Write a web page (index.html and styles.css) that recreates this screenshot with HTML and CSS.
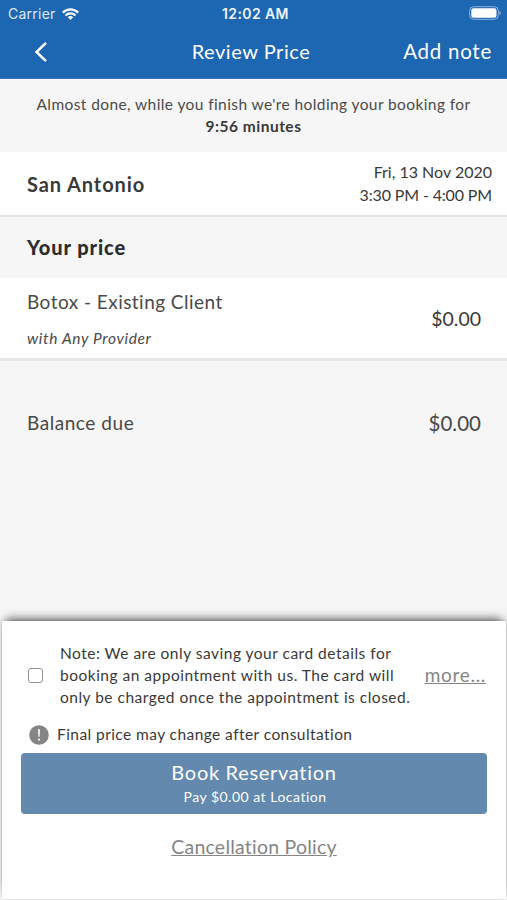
FILE: index.html
```html
<!DOCTYPE html>
<html lang="en">
<head>
<meta charset="utf-8">
<title>Review Price</title>
<link rel="stylesheet" href="styles.css">
</head>
<body>
<div class="screen">
  <header class="header">
    <div class="status">
      <div class="carrier"><span>Carrier</span>
        <svg class="wifi" viewBox="0 0 17 12" width="17" height="12" fill="none" stroke="#fff" stroke-width="2.2">
          <path d="M.8 4.6a10.9 10.9 0 0 1 15.4 0"/><path d="M3.5 7.5a7.1 7.1 0 0 1 10 0"/><path d="M8.5 12 5.8 9.3a3.8 3.8 0 0 1 5.4 0z" fill="#fff" stroke="none"/>
        </svg>
      </div>
      <span class="clock">12:02 AM</span>
      <svg class="battery" viewBox="0 0 32 14" width="32" height="14">
        <rect x=".7" y=".7" width="28.6" height="12.6" rx="3.8" fill="none" stroke="#8fb3db"/>
        <rect x="2.3" y="2.3" width="25.2" height="9.4" rx="2.2" fill="#fff"/>
        <path d="M30.4 4.8q1.4.7 1.4 2.2t-1.4 2.2z" fill="#8fb3db"/>
      </svg>
    </div>
    <nav class="nav">
      <svg class="back" viewBox="0 0 14 22" width="14" height="22" fill="none" stroke="#fff" stroke-width="2.5"><path d="M12 1.8 2.5 11 12 20.2"/></svg>
      <h1 class="title">Review Price</h1>
      <span class="add-note">Add note</span>
    </nav>
  </header>
  <section class="notice">
    <p class="notice-text">Almost done, while you finish we're holding your booking for</p>
    <p class="notice-time">9:56 minutes</p>
  </section>
  <section class="location">
    <h2 class="place">San Antonio</h2>
    <div class="when"><p class="date">Fri, 13 Nov 2020</p><p class="hours">3:30 PM - 4:00 PM</p></div>
  </section>
  <h2 class="heading"><span>Your price</span></h2>
  <section class="item">
    <div class="details"><p class="service">Botox - Existing Client</p><p class="provider">with Any Provider</p></div>
    <span class="price">$0.00</span>
  </section>
  <section class="balance"><span class="due">Balance due</span><span class="total">$0.00</span></section>
  <section class="sheet">
    <div class="consent">
      <span class="checkbox"></span>
      <p class="note">Note: We are only saving your card details for<br>booking an appointment with us. The card will<br>only be charged once the appointment is closed.</p>
      <a class="more">more...</a>
    </div>
    <div class="warning">
      <svg viewBox="0 0 20 20" width="20" height="20"><circle cx="10" cy="10" r="9.8" fill="#858585"/><path d="M9.1 4.2h1.8l-.3 7.6H9.4z" fill="#fff"/><circle cx="10" cy="14.6" r="1.1" fill="#fff"/></svg>
      <span class="final">Final price may change after consultation</span>
    </div>
    <div class="book"><span class="book-title">Book Reservation</span><span class="book-sub">Pay $0.00 at Location</span></div>
    <a class="policy">Cancellation Policy</a>
  </section>
</div>
</body>
</html>
```
FILE: styles.css
```css
* { box-sizing: border-box; margin: 0; padding: 0; }
body { font-family: Lato, "Liberation Sans", sans-serif; color: #393939; }
.screen { display: flex; flex-direction: column; height: 900px; background: #f6f6f6; overflow: hidden; white-space: nowrap; }
.header { height: 79px; background: #1d66b1; color: #fff; border-bottom: 1px solid #3b7bbd; }
.status { display: grid; grid-template-columns: 1fr auto 1fr; align-items: center; height: 27px; padding: 0 6px 0 8px; font-family: Inter, sans-serif; }
.carrier { display: flex; align-items: center; gap: 6px; font-size: 14px; letter-spacing: .25px; color: #dfeafa; }
.clock { font-size: 14px; font-weight: 600; letter-spacing: .4px; color: #eef5ff; padding-left: 2px; }
.battery { justify-self: end; margin-top: -1px; }
.nav { display: grid; grid-template-columns: 1fr auto 1fr; align-items: center; height: 48px; padding: 0 15px 0 34px; }
.back { margin-top: 2px; }
.title { font-size: 20px; font-weight: 400; letter-spacing: .55px; margin-left: -24px; }
.add-note { justify-self: end; font-size: 20.5px; letter-spacing: .75px; }
.notice { height: 73px; padding-top: 14px; text-align: center; line-height: 22px; }
.notice-text { font-size: 15.5px; letter-spacing: .4px; color: #4b4b4b; }
.notice-time { font-size: 15.5px; font-weight: 700; letter-spacing: .5px; }
.location { display: flex; align-items: center; justify-content: space-between; height: 65px; padding: 0 15px 0 27px; background: #fff; border-bottom: 2px solid #e4e4e4; }
.place { font-size: 20px; font-weight: 700; letter-spacing: .9px; }
.when { padding-bottom: 2px; text-align: right; line-height: 23px; font-size: 16px; }
.hours { letter-spacing: -.15px; }
.heading { height: 61px; padding-left: 27px; font-size: 20px; line-height: 60px; font-weight: 900; letter-spacing: .9px; color: #2d2d2d; }
.item { display: flex; align-items: center; justify-content: space-between; height: 83px; padding: 0 26px 0 27px; background: #fff; border-bottom: 3px solid #e8e8e8; }
.details { padding-top: 4px; }
.service { font-size: 19px; line-height: 36px; letter-spacing: .46px; color: #494949; }
.provider { font-size: 15.5px; line-height: 36px; font-style: italic; letter-spacing: .65px; color: #494949; }
.price { font-size: 19.5px; }
.total { font-size: 20.5px; }
.balance { display: flex; justify-content: space-between; align-items: center; height: 123px; padding: 0 26px 0 27px; color: #484848; }
.due { font-size: 19px; letter-spacing: .55px; }
.sheet { display: flex; flex-direction: column; height: 278px; margin: auto 1px 1px 2px; padding: 20px 19px 0 19px; background: #fff; box-shadow: 0 -6px 9px -4px #555, 0 0 2px #bbb; }
.consent { display: flex; align-items: center; height: 67px; padding: 0 1px 0 7px; }
.checkbox { width: 15px; height: 15px; margin: 2px 17px 0 0; border: 1.5px solid #949494; border-radius: 3px; }
.note { font-size: 15.5px; line-height: 22px; letter-spacing: .5px; }
.more { margin-left: auto; font-size: 19px; letter-spacing: .7px; color: #858585; text-decoration: underline; }
.warning { display: flex; align-items: center; gap: 8px; height: 31px; margin: 11px 0 3px; padding-left: 8px; }
.final { margin-top: -2px; font-size: 15.5px; letter-spacing: .43px; }
.book { display: flex; flex-direction: column; align-items: center; height: 61px; padding-top: 6px; border-radius: 4px; background: #6389ae; color: #fff; }
.book-title { font-size: 20px; line-height: 26px; letter-spacing: .7px; }
.book-sub { font-size: 14px; line-height: 24px; letter-spacing: .5px; padding-left: 2px; }
.policy { align-self: center; margin-top: 20px; font-size: 19.5px; line-height: 26px; letter-spacing: .22px; color: #858585; text-decoration: underline; }
```
